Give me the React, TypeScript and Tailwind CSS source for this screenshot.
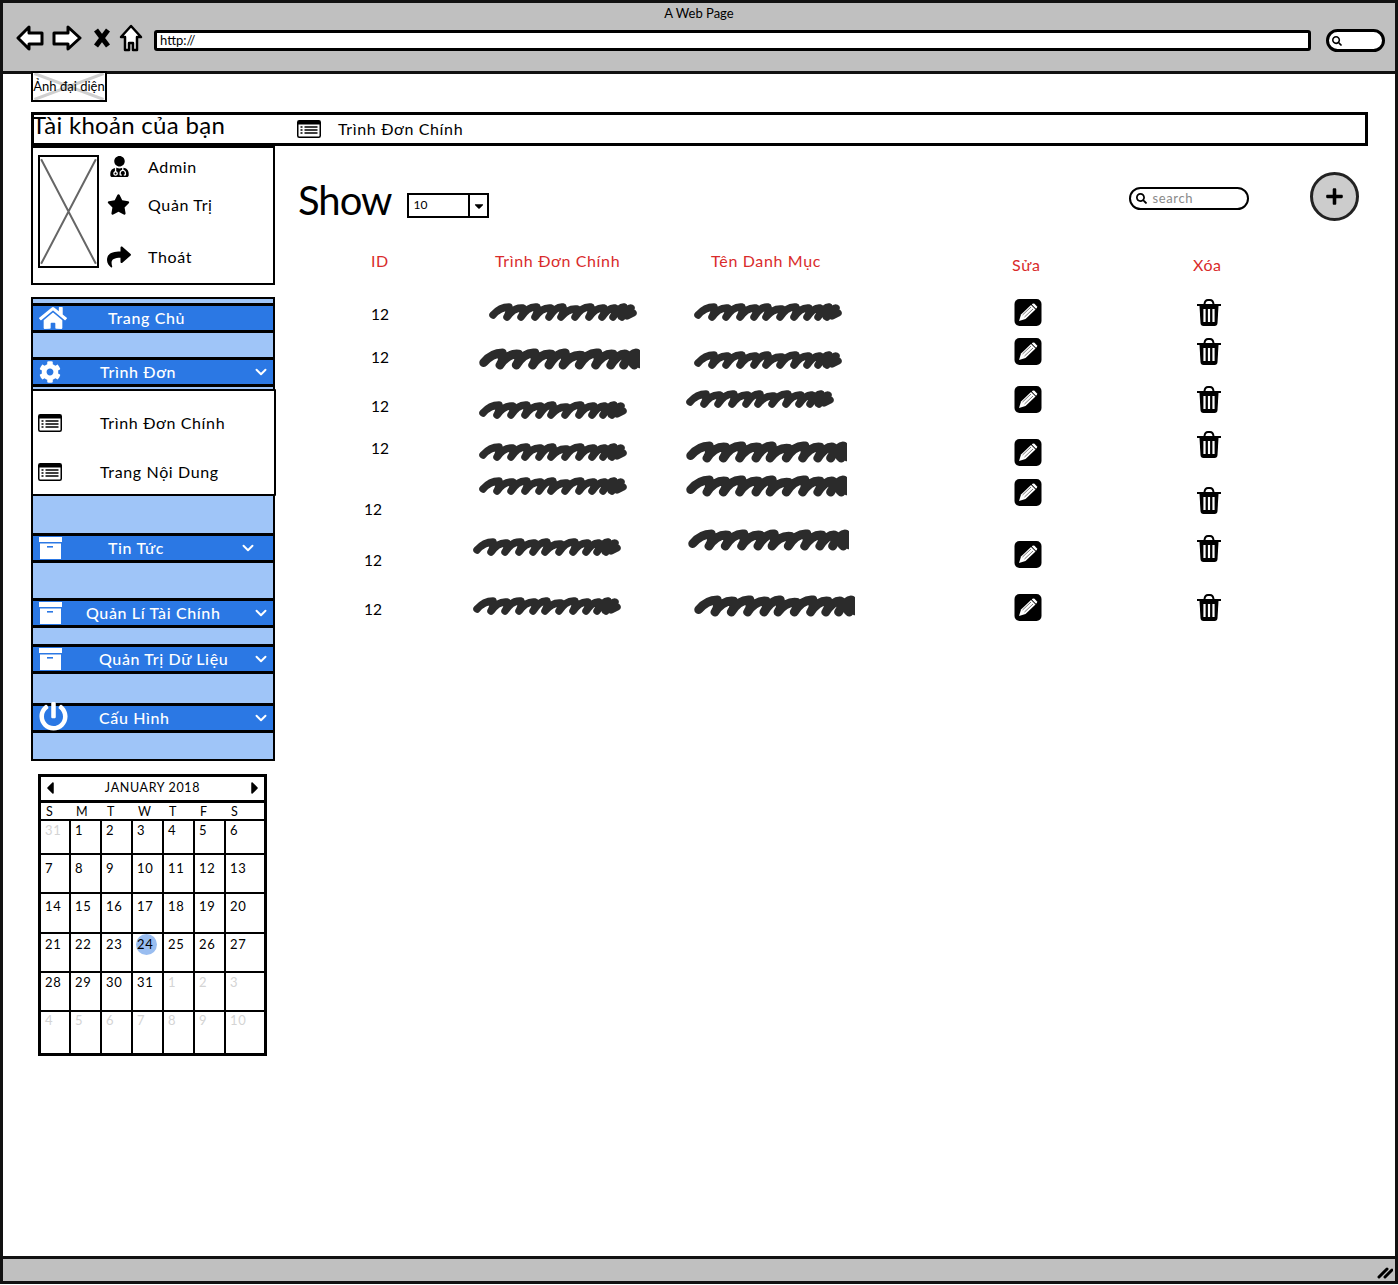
import React from "react";
import { FaHome, FaCog, FaStar, FaShare, FaUserMd, FaPowerOff, FaSearch, FaPlus, FaCaretDown, FaCaretLeft, FaCaretRight } from "react-icons/fa";
import { ChevronDown } from "lucide-react";

function makeScribble() {
  let d = "M4 13 Q11 5 20 5";
  let x = 20;
  const tops = [6, 5, 6, 5, 7, 5, 6, 6, 5, 6];
  const steps = [14, 14, 14, 12, 14, 14, 13, 11, 9, 7];
  tops.forEach((t, i) => {
    d += ` Q${x + 1} 11 ${x - 2} 15 Q${x + 5} ${t - 1} ${x + steps[i]} ${t}`;
    x += steps[i];
  });
  d += ` L${x - 4} 14 L${x + 2} 11 L${x - 10} 14`;
  return d;
}
const SCRIBBLE = makeScribble();

function Scribble({ wide, className }: { wide?: boolean; className: string }) {
  return (
    <svg className={"block shrink-0 " + className} width={wide ? 161 : 150} height={wide ? 24 : 20} viewBox={wide ? "0 0 138 20" : "0 0 150 20"} preserveAspectRatio="none">
      <path d={SCRIBBLE} fill="none" stroke="#2b2b2b" strokeWidth="7.5" strokeLinecap="round" strokeLinejoin="round" />
    </svg>
  );
}

function ListIcon({ className = "" }: { className?: string }) {
  return (
    <svg className={"block shrink-0 " + className} width="24" height="18" viewBox="0 0 24 18">
      <rect x="0.75" y="0.75" width="22.5" height="16.5" rx="1.5" fill="#fff" stroke="#000" strokeWidth="1.5" />
      <rect x="1" y="1" width="22" height="3.5" fill="#000" />
      <path d="M3.5 7 H5.5 M3.5 10 H5.5 M3.5 13 H5.5 M7.5 7 H20.5 M7.5 10 H20.5 M7.5 13 H20.5" stroke="#000" strokeWidth="1.4" />
    </svg>
  );
}

function EditIcon({ className }: { className: string }) {
  return (
    <svg className={"block " + className} width="28" height="27" viewBox="0 0 28 27">
      <rect x="0.5" y="0" width="27" height="27" rx="5" fill="#000" />
      <path d="M5 22 L7 15.5 L17 6 L21.5 10.5 L11.5 20 Z" fill="#fff" />
      <path d="M18.5 4.8 Q19.5 4 20.5 4.8 L22.8 7.2 Q23.5 8.2 22.8 9 L22 9.8 L17.8 5.5 Z" fill="#fff" />
      <path d="M8.5 16 L17 8 M10.5 18 L19 10" stroke="#555" strokeWidth="0.8" />
    </svg>
  );
}

function TrashIcon({ className }: { className: string }) {
  return (
    <svg className={"block " + className} width="24" height="27" viewBox="0 0 24 27">
      <path d="M0 6 H24 M7.5 5 Q8 1 11 1 H13 Q16 1 16.5 5" fill="none" stroke="#000" strokeWidth="2" />
      <path d="M2.5 7 H21.5 L20.5 24 Q20.3 27 17.5 27 H6.5 Q3.7 27 3.5 24 Z" fill="#000" />
      <path d="M7.5 10 V23 M12 10 V23 M16.5 10 V23" stroke="#fff" strokeWidth="2.2" />
    </svg>
  );
}

function ArchiveIcon() {
  return (
    <svg className="block" width="23" height="22" viewBox="0 0 23 22">
      <rect x="0" y="0" width="23" height="5" fill="#fff" />
      <path d="M1 6.5 H22 V22 H1 Z" fill="#fff" />
      <rect x="8" y="9" width="6" height="1.6" fill="#2b78e4" />
    </svg>
  );
}

function Placeholder({ light }: { light?: boolean }) {
  return (
    <svg className="absolute inset-0 h-full w-full" viewBox="0 0 100 100" preserveAspectRatio="none">
      <path d="M2 2 L98 98 M98 2 L2 98" fill="none" stroke={light ? "#cfcfcf" : "#666"} strokeWidth={light ? 3 : 2} vectorEffect="non-scaling-stroke" />
    </svg>
  );
}

function MenuHead({ icon, label, textClass, chevron = true, chevronClass = "" }: { icon: React.ReactNode; label: string; textClass: string; chevron?: boolean; chevronClass?: string }) {
  return (
    <div className="-mx-[2px] flex h-[30px] items-center border-y-[3px] border-x-2 border-black bg-[#2b78e4] pl-[6px] pr-[3px] text-white">
      <div className="flex w-[30px] shrink-0 items-center justify-start">{icon}</div>
      <span className={"whitespace-nowrap " + textClass}>{label}</span>
      {chevron && <ChevronDown className={"ml-auto " + chevronClass} size={18} strokeWidth={2.6} />}
    </div>
  );
}

const weeks = [
  [["31", 1], ["1"], ["2"], ["3"], ["4"], ["5"], ["6"]],
  [["7"], ["8"], ["9"], ["10"], ["11"], ["12"], ["13"]],
  [["14"], ["15"], ["16"], ["17"], ["18"], ["19"], ["20"]],
  [["21"], ["22"], ["23"], ["24", 2], ["25"], ["26"], ["27"]],
  [["28"], ["29"], ["30"], ["31"], ["1", 1], ["2", 1], ["3", 1]],
  [["4", 1], ["5", 1], ["6", 1], ["7", 1], ["8", 1], ["9", 1], ["10", 1]],
] as [string, number?][][];

const rowHeights = ["h-[34px]", "h-[39px]", "h-[40px]", "h-[39px]", "h-[39px]", "h-[41px]"];
const rowPads = ["pt-[3px]", "pt-[7px]", "pt-[6px]", "pt-[4px]", "pt-[3px]", "pt-[2px]"];

function Calendar() {
  return (
    <div className="ml-[7px] mt-[13px] w-[229px] border-[3px] border-black text-[13px] leading-none text-black">
      <div className="flex h-[26px] items-center justify-between border-b-[3px] border-black pb-[1px] text-[12.5px]">
        <FaCaretLeft className="-ml-[1px]" size={20} />
        <span>JANUARY 2018</span>
        <FaCaretRight className="-mr-[1px]" size={20} />
      </div>
      <div className="grid h-[18px] grid-cols-[30px_repeat(5,31px)_1fr] items-center border-b-[2px] border-black pt-[2px] text-[12.5px]">
        {["S", "M", "T", "W", "T", "F", "S"].map((d, i) => (
          <span key={i} className="pl-[5px]">{d}</span>
        ))}
      </div>
      {weeks.map((w, r) => (
        <div key={r} className={"grid grid-cols-[30px_repeat(5,31px)_1fr] border-black " + rowHeights[r] + (r < 5 ? " border-b-[2px]" : "")}>
          {w.map(([t, k], c) => (
            <div key={c} className={"relative border-black pl-[4px] " + rowPads[r] + (c < 6 ? " border-r-[2px]" : "")}>
              {k === 2 && <span className="absolute left-[3px] top-0 h-[21px] w-[21px] rounded-full bg-[#99bdf0]" />}
              <span className={"relative " + (k === 1 ? "text-[#d4d4d4]" : "")}>{t}</span>
            </div>
          ))}
        </div>
      ))}
    </div>
  );
}

function Sidebar() {
  return (
    <div className="w-[244px] shrink-0">
      <div className="flex h-[139px] border-[2.5px] border-black">
        <div className="relative ml-[5px] mt-[7px] h-[113px] w-[61px] border-2 border-black">
          <Placeholder />
        </div>
        <div className="ml-[8px] flex flex-col text-[16px] leading-none">
          <div className="mt-[8px] flex items-center"><span className="flex w-[41px] pl-[2px]"><FaUserMd size={21} /></span><span>Admin</span></div>
          <div className="mt-[16px] flex items-center"><span className="flex w-[41px]"><FaStar size={23} /></span><span>Quản Trị</span></div>
          <div className="mt-[29px] flex items-center"><span className="flex w-[41px]"><FaShare size={24} /></span><span>Thoát</span></div>
        </div>
      </div>
      <div className="mt-[12px] flex h-[464px] flex-col border-2 border-black bg-[#9fc5f8] text-[16px] font-medium">
        <div className="mt-[4px]">
          <MenuHead icon={<FaHome size={28} />} label="Trang Chủ" textClass="ml-[39px]" chevron={false} />
        </div>
        <div className="mt-[24px]">
          <MenuHead icon={<FaCog size={22} />} label="Trình Đơn" textClass="ml-[31px]" />
        </div>
        <div className="-mx-[2px] -mr-[3px] mt-[2px] h-[107px] rounded-[1px] border-2 border-black bg-white font-normal">
          <div className="mt-[20px] flex h-[24px] items-center"><ListIcon className="ml-[5px]" /><span className="ml-[38px]">Trình Đơn Chính</span></div>
          <div className="mt-[25px] flex h-[24px] items-center"><ListIcon className="ml-[5px]" /><span className="ml-[38px]">Trang Nội Dung</span></div>
        </div>
        <div className="mt-[37px]">
          <MenuHead icon={<ArchiveIcon />} label="Tin Tức" textClass="ml-[39px]" chevronClass="mr-[13px]" />
        </div>
        <div className="mt-[35px]">
          <MenuHead icon={<ArchiveIcon />} label="Quản Lí Tài Chính" textClass="ml-[17px]" />
        </div>
        <div className="mt-[16px]">
          <MenuHead icon={<ArchiveIcon />} label="Quản Trị Dữ Liệu" textClass="ml-[30px]" />
        </div>
        <div className="mt-[29px]">
          <MenuHead icon={<FaPowerOff className="-mt-[3px]" size={29} />} label="Cấu Hình" textClass="ml-[30px]" />
        </div>
      </div>
      <Calendar />
    </div>
  );
}

function IdCell({ className }: { className: string }) {
  return <div className={"h-[18px] text-[15.5px] leading-[18px] tracking-normal text-black " + className}>12</div>;
}

function Main() {
  return (
    <div className="min-w-0 flex-1 pl-[23px] pr-[10px]">
      <div className="flex h-[105px] items-start">
        <span className="mt-[29px] shrink-0 text-[40px] leading-[50px] tracking-[-1px] text-black">Show</span>
        <div className="ml-[16px] mt-[47px] flex h-[25px] w-[82px] shrink-0 border-2 border-black text-[12px]">
          <span className="flex-1 pl-[4px] leading-[20px] tracking-normal">10</span>
          <span className="flex w-[19px] items-center justify-center border-l-2 border-black"><FaCaretDown size={14} /></span>
        </div>
        <div className="ml-[640px] mt-[41px] flex h-[23px] w-[120px] shrink-0 items-center rounded-full border-2 border-black pl-[5px] text-[13px] text-[#8a8a8a]">
          <FaSearch className="text-black" size={11} />
          <span className="ml-[5px] leading-none">search</span>
        </div>
        <div className="ml-[61px] mt-[26px] flex h-[49px] w-[49px] shrink-0 items-center justify-center rounded-full border-[3px] border-[#222] bg-[#cccccc]">
          <FaPlus size={19} />
        </div>
      </div>
      <div className="grid grid-cols-[172px_210px_318px_181px_auto] text-[16px] text-[#d92b2b]">
        <div className="flex flex-col">
          <div className="ml-[73px] h-[20px] leading-[20px]">ID</div>
          <IdCell className="ml-[73px] mt-[34px]" />
          <IdCell className="ml-[73px] mt-[25px]" />
          <IdCell className="ml-[73px] mt-[31px]" />
          <IdCell className="ml-[73px] mt-[24px]" />
          <IdCell className="ml-[66px] mt-[43px]" />
          <IdCell className="ml-[66px] mt-[33px]" />
          <IdCell className="ml-[66px] mt-[31px]" />
        </div>
        <div className="flex flex-col">
          <div className="ml-[25px] h-[20px] whitespace-nowrap leading-[20px]">Trình Đơn Chính</div>
          <Scribble className="ml-[19px] mt-[31px]" />
          <Scribble wide className="ml-[9px] mt-[25px]" />
          <Scribble className="ml-[9px] mt-[29px]" />
          <Scribble className="ml-[9px] mt-[22px]" />
          <Scribble className="ml-[9px] mt-[14px]" />
          <Scribble className="ml-[3px] mt-[41px]" />
          <Scribble className="ml-[3px] mt-[39px]" />
        </div>
        <div className="flex flex-col">
          <div className="ml-[31px] h-[20px] whitespace-nowrap leading-[20px]">Tên Danh Mục</div>
          <Scribble className="ml-[14px] mt-[31px]" />
          <Scribble className="ml-[14px] mt-[28px]" />
          <Scribble className="ml-[6px] mt-[19px]" />
          <Scribble wide className="ml-[6px] mt-[31px]" />
          <Scribble wide className="ml-[6px] mt-[10px]" />
          <Scribble wide className="ml-[8px] mt-[30px]" />
          <Scribble wide className="ml-[14px] mt-[42px]" />
        </div>
        <div className="flex flex-col">
          <div className="ml-[14px] mt-[4px] h-[20px] leading-[20px]">Sửa</div>
          <EditIcon className="ml-[16px] mt-[24px]" />
          <EditIcon className="ml-[16px] mt-[12px]" />
          <EditIcon className="ml-[16px] mt-[21px]" />
          <EditIcon className="ml-[16px] mt-[26px]" />
          <EditIcon className="ml-[16px] mt-[13px]" />
          <EditIcon className="ml-[16px] mt-[35px]" />
          <EditIcon className="ml-[16px] mt-[26px]" />
        </div>
        <div className="flex flex-col">
          <div className="ml-[14px] mt-[4px] h-[20px] leading-[20px]">Xóa</div>
          <TrashIcon className="ml-[18px] mt-[24px]" />
          <TrashIcon className="ml-[18px] mt-[12px]" />
          <TrashIcon className="ml-[18px] mt-[21px]" />
          <TrashIcon className="ml-[18px] mt-[18px]" />
          <TrashIcon className="ml-[18px] mt-[29px]" />
          <TrashIcon className="ml-[18px] mt-[21px]" />
          <TrashIcon className="ml-[18px] mt-[32px]" />
        </div>
      </div>
    </div>
  );
}

export default function App() {
  return (
    <div className="flex h-[1284px] w-[1398px] flex-col border-[3px] border-[#111] bg-white font-['Lato','Open_Sans',sans-serif] tracking-[0.04em] text-black">
      <div className="h-[71px] shrink-0 border-b-[3px] border-[#111] bg-[#c0c0c0]">
        <div className="h-[20px] text-center text-[13px] leading-[20px] tracking-normal">A Web Page</div>
        <div className="flex items-center pl-[13px]">
          <svg width="28" height="26" viewBox="0 0 28 26"><path d="M2 13 L13 2 V8 H26 V19 H13 V24 Z" fill="#fff" stroke="#000" strokeWidth="3" strokeLinejoin="round" /></svg>
          <svg className="ml-[8px]" width="30" height="26" viewBox="0 0 30 26"><path d="M28 13 L16 2 V8 H2 V19 H16 V24 Z" fill="#fff" stroke="#000" strokeWidth="3" strokeLinejoin="round" /></svg>
          <svg className="ml-[11px]" width="18" height="20" viewBox="0 0 18 20"><path d="M3 2 L15 18 M15 2 L3 18" stroke="#000" strokeWidth="5" /></svg>
          <svg className="ml-[8px]" width="24" height="28" viewBox="0 0 24 28"><path d="M12 2 L22 13 H18 V26 H14 V19 H10 V26 H6 V13 H2 Z" fill="#fff" stroke="#000" strokeWidth="2.5" strokeLinejoin="round" /></svg>
          <div className="ml-[11px] mt-[6px] flex h-[21px] w-[1157px] shrink-0 items-center rounded-[3px] border-[3px] border-black bg-white pl-[3px] text-[13px] leading-none tracking-normal">http://</div>
          <div className="ml-[15px] mt-[6px] flex h-[23px] w-[59px] shrink-0 items-center rounded-full border-[3px] border-black bg-white pl-[3px]">
            <FaSearch size={10} />
          </div>
        </div>
      </div>
      <div className="flex flex-1 flex-col pl-[28px] pr-[27px]">
        <div className="relative -mt-[3px] flex h-[31px] w-[76px] items-center justify-center border-2 border-black bg-white">
          <Placeholder light />
          <span className="relative whitespace-nowrap text-[13px] leading-none tracking-normal">Ảnh đại diện</span>
        </div>
        <div className="mt-[10px] flex h-[34px] items-center border-[3px] border-black">
          <span className="-ml-[2px] -mt-[8px] w-[265px] shrink-0 whitespace-nowrap text-[24px] leading-none tracking-[0.3px]">Tài khoản của bạn</span>
          <ListIcon />
          <span className="ml-[17px] whitespace-nowrap text-[16px]">Trình Đơn Chính</span>
        </div>
        <div className="flex">
          <Sidebar />
          <Main />
        </div>
      </div>
      <div className="relative h-[25px] shrink-0 border-t-[3px] border-[#111] bg-[#c0c0c0]">
        <svg className="absolute bottom-[2px] right-[2px]" width="16" height="14" viewBox="0 0 16 14"><path d="M2 12 L10 4 M8 12 L15 5" stroke="#000" strokeWidth="3" strokeLinecap="round" /></svg>
      </div>
    </div>
  );
}
